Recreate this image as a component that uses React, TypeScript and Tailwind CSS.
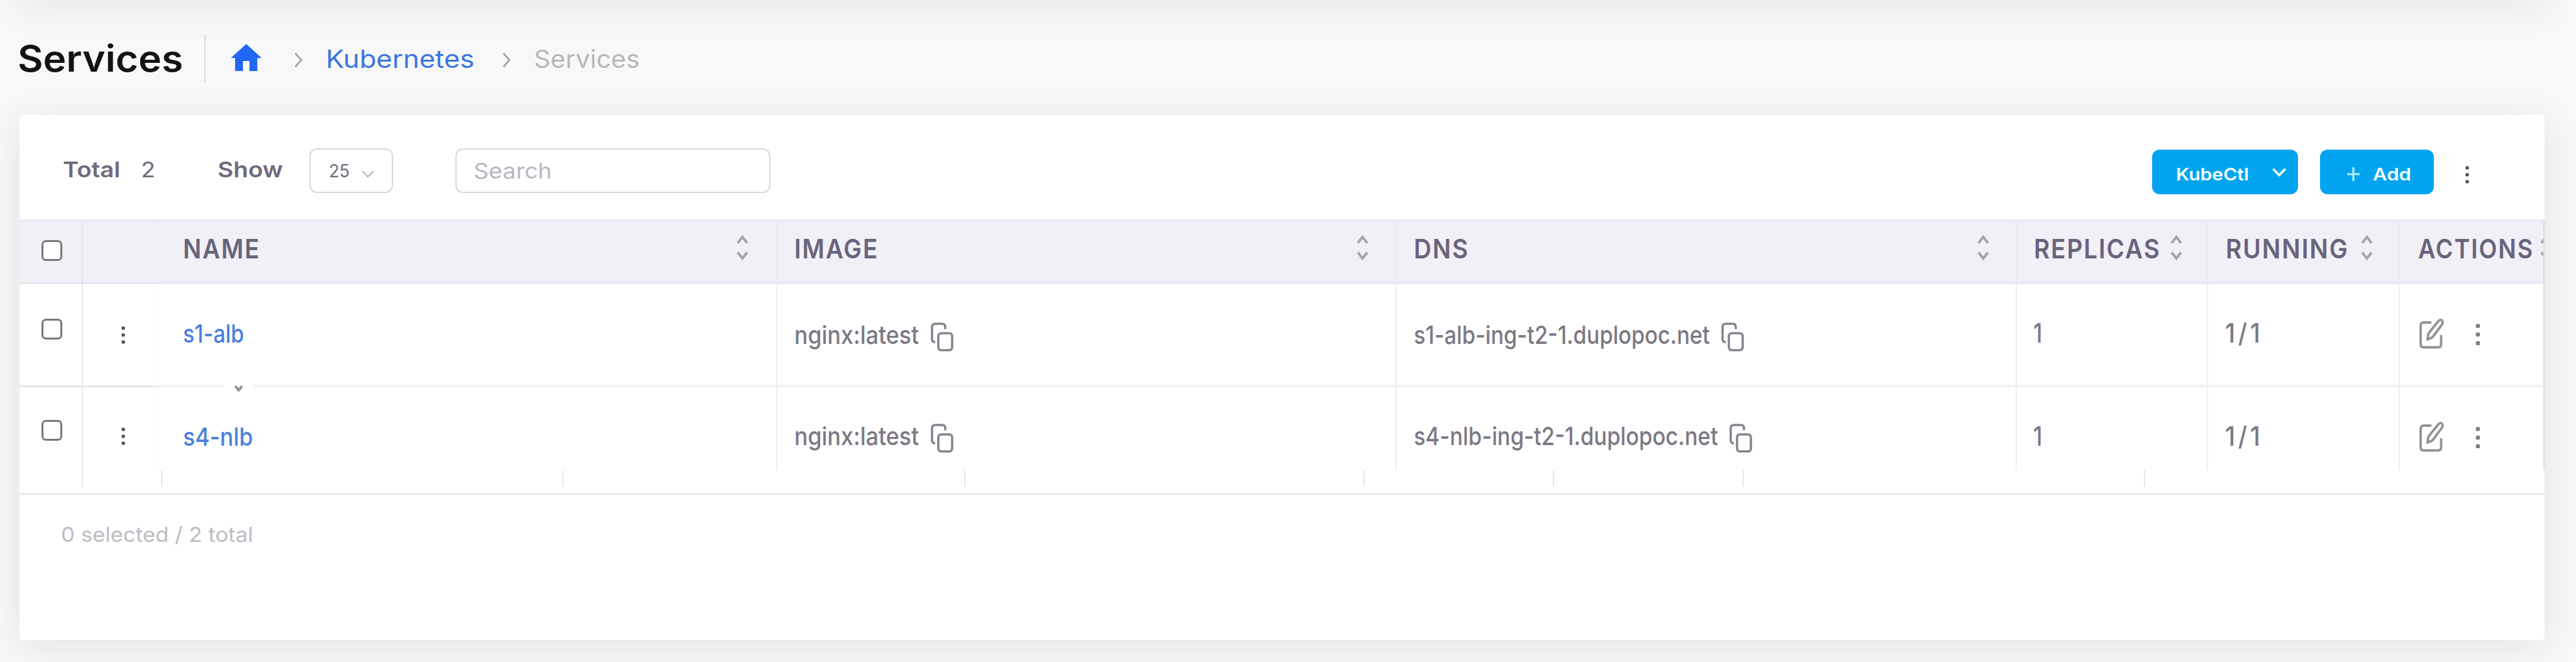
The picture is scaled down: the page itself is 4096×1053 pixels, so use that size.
import { useLayoutEffect, useRef, useState } from "react";
import type { ReactNode } from "react";

/** One line of text, condensed or widened so that it fills the given width. */
function Fit({ w, className = "", children }: { w: number; className?: string; children: ReactNode }) {
  const ref = useRef<HTMLSpanElement>(null);
  const [scale, setScale] = useState(1);
  useLayoutEffect(() => {
    if (ref.current) setScale(w / ref.current.offsetWidth);
  }, [w]);
  return (
    <span className={`block shrink-0 h-10 leading-10 whitespace-nowrap ${className}`} style={{ width: w }}>
      <span ref={ref} className="inline-block origin-left leading-10" style={{ transform: `scaleX(${scale})` }}>
        {children}
      </span>
    </span>
  );
}

function Chevron({ className }: { className: string }) {
  return (
    <svg className={`shrink-0 ${className}`} viewBox="0 0 13 25" fill="none" stroke="currentColor" strokeWidth="3">
      <path d="M1.5 1.5 11 12.5 1.5 23.5" />
    </svg>
  );
}

function Down({ className, width = 3.4 }: { className: string; width?: number }) {
  return (
    <svg className={`shrink-0 ${className}`} viewBox="0 0 20 12" fill="none" stroke="currentColor" strokeWidth={width} strokeLinejoin="round">
      <path d="M1.2 1.2 10 10.200 18.800 1.2" />
    </svg>
  );
}

function Sort({ className = "" }: { className?: string }) {
  return (
    <svg className={`h-11 w-[19px] shrink-0 text-[#a5a2b0] ${className}`} viewBox="0 0 19 44" fill="none" stroke="currentColor" strokeWidth="4">
      <path d="M2 14.500 9.500 5l7.500 9.500M2 29.500 9.500 39l7.500-9.500" />
    </svg>
  );
}

function Dots({ className }: { className: string }) {
  return (
    <svg className={`shrink-0 ${className}`} viewBox="0 0 8 28" fill="currentColor">
      <rect x="1.500" y="0.500" width="5" height="5" rx="1" />
      <rect x="1.500" y="11.500" width="5" height="5" rx="1" />
      <rect x="1.500" y="22.500" width="5" height="5" rx="1" />
    </svg>
  );
}

function Copy({ className }: { className: string }) {
  return (
    <svg className={`h-[46px] w-[36px] shrink-0 text-[#85838d] ${className}`} viewBox="0 0 36 46" fill="none" stroke="currentColor" strokeWidth="3.600">
      <rect x="12" y="17" width="22" height="27" rx="4.500" />
      <path d="M7 31.500Q2 31 2 26V7Q2 2 7 2h11Q23 2 23 7v3.500" />
    </svg>
  );
}

function Edit() {
  return (
    <svg className="mt-[54px] h-[50px] w-10 shrink-0 text-[#909296]" viewBox="0 0 40 50" fill="none" stroke="currentColor" strokeWidth="3.800" strokeLinejoin="round">
      <path d="M20 7H8Q3 7 3 12V41.500Q3 46.500 8 46.500H30.500Q35.500 46.500 35.500 41.500V27" />
      <path d="M31 5Q34.300 1 37 4Q39 6.500 37 10.200L21.800 30.500 13.800 34l1.700-9.700z" />
    </svg>
  );
}

function Checkbox({ className }: { className: string }) {
  return <span className={`block size-[33px] rounded-[7px] border-[3px] border-[#77777a] bg-white ${className}`} />;
}

const columns = [
  { label: "NAME", cell: "w-[987px] pl-[42px] pr-[44px]", w: 123 },
  { label: "IMAGE", cell: "w-[985px] pl-[27px] pr-[43px]", w: 134 },
  { label: "DNS", cell: "w-[986px] pl-[27px] pr-[42px]", w: 88 },
  { label: "REPLICAS", cell: "w-[304px] pl-[27px] pr-[39px]", w: 202 },
  { label: "RUNNING", cell: "w-[305px] pl-[28px] pr-[41px]", w: 196 },
];

const rows = [
  {
    name: "s1-alb", nameW: 97, dns: "s1-alb-ing-t2-1.duplopoc.net", dnsW: 471,
    height: "h-[164px]", check: "mt-[55px]", dots: "mt-[67px]", text: "mt-[61px]", copy: "mt-[61px]",
    edge: "border-b-[3px] border-[#e8e8eb]", edgeSoft: "border-b-[4px] border-b-[#f1f1f5]",
  },
  {
    name: "s4-nlb", nameW: 111, dns: "s4-nlb-ing-t2-1.duplopoc.net", dnsW: 484,
    height: "h-[132px]", check: "mt-[52px]", dots: "mt-[64px]", text: "mt-[58px]", copy: "mt-[58px]",
    edge: "", edgeSoft: "",
  },
];

const footTicks = ["w-[126px]", "w-[638px]", "w-[639px]", "w-[635px]", "w-[301px]", "w-[302px]", "w-[638px]"];

export default function App() {
  return (
    <div className="flex h-[1053px] w-[4096px] flex-col overflow-hidden bg-[#f8f8f8] font-['Inter',sans-serif] text-[#6e6b7b]">
      <div className="ml-[31px] h-0 w-[4015px] shrink-0">
        <div className="-mt-10 h-10 bg-white shadow-[0_10px_58px_rgba(34,41,47,0.1)]" />
      </div>

      <header className="flex h-[183px] shrink-0 items-center pl-[28px]">
        <Fit w={263} className="mt-0.5 text-[58px] font-semibold text-[#131313]">Services</Fit>
        <span className="ml-[34px] mt-0.5 h-[75px] w-0.5 bg-[#d8d9db]" />
        <svg className="ml-[40px] h-[43px] w-[49px]" viewBox="2 3 20 17" preserveAspectRatio="none" fill="#2166f5">
          <path d="M9.900 20v-6.300h4.200V20h5.100v-8.200H22L12 3 2 11.800h2.800V20z" />
        </svg>
        <Chevron className="ml-[52px] mt-2 h-[25px] w-[13px] text-[#a6a6aa]" />
        <Fit w={236} className="ml-[37px] mt-1 text-[39px] text-[#3b76de]">Kubernetes</Fit>
        <Chevron className="ml-[45px] mt-2 h-[25px] w-[13px] text-[#a6a6aa]" />
        <Fit w={168} className="ml-[37px] mt-1 text-[39px] text-[#b6b7bb]">Services</Fit>
      </header>

      <main className="ml-[30.500px] flex h-[835px] w-[4015px] shrink-0 flex-col rounded-[5px] bg-white shadow-[0_10px_58px_rgba(34,41,47,0.1)]">
        <section className="flex h-[166px] shrink-0 items-start justify-between pl-[69px] pr-[119px] pt-[53px]">
          <div className="flex h-[71px] items-center">
            <Fit w={91} className="-mt-1 text-[34.5px] font-semibold">Total</Fit>
            <Fit w={23} className="-mt-1 ml-[33px] text-[34.5px]">2</Fit>
            <Fit w={104} className="-mt-1 ml-[99px] text-[34.5px] font-semibold">Show</Fit>
            <div className="ml-[42px] flex h-[71px] w-[133px] items-center rounded-[12px] border-[2.5px] border-[#d8d6de] pl-[29px]">
              <Fit w={33} className="text-[28px]">25</Fit>
              <Down className="ml-[19px] mt-2.5 h-3 w-5 text-[#b5b5ba]" width={2.2} />
            </div>
            <div className="ml-[99px] flex h-[71px] w-[501px] items-center rounded-[12px] border-[2.5px] border-[#d8d6de] pl-[27px]">
              <Fit w={124} className="text-[34.5px] text-[#b9b7c1]">Search</Fit>
            </div>
          </div>
          <div className="mt-0.5 flex h-[71px] items-center">
            <button className="flex h-[71px] w-[232px] items-center rounded-[12px] bg-[#02a4ef] pl-[38px] text-left text-white">
              <Fit w={116} className="mt-1.5 text-[27.5px] font-semibold text-[#f2fdff]">KubeCtl</Fit>
              <Down className="ml-[37px] h-[14px] w-[22px] text-[#effcff]" />
            </button>
            <button className="ml-[35px] flex h-[71px] w-[181px] items-center rounded-[12px] bg-[#02a4ef] pl-[43px] text-left text-white">
              <svg className="mt-1.5 h-[22px] w-[20px]" viewBox="0 0 20 22" fill="none" stroke="#b8ecff" strokeWidth="3.200">
                <path d="M10 0v22M0 11h20" />
              </svg>
              <Fit w={61} className="ml-[21px] mt-1.5 text-[27.5px] font-semibold text-[#f2fdff]">Add</Fit>
            </button>
            <Dots className="ml-[49px] mt-2 h-7 w-2 text-[#4a4851]" />
          </div>
        </section>

        <div className="flex h-[103px] shrink-0 overflow-hidden border-t-[3px] border-[#ebe9f1] bg-[#f1f0f6] text-[43px] font-semibold tracking-wider text-[#69647d]">
          <div className="w-[101px] shrink-0 border-b-[3px] border-r-2 border-[#e7e5ed] pl-[35px]">
            <Checkbox className="mt-[30px]" />
          </div>
          <div className="w-[117px] shrink-0 border-b-[3px] border-r border-[#e7e5ed] border-r-[#eeecf3]" />
          {columns.map((c) => (
            <div key={c.label} className={`flex shrink-0 items-start justify-between border-b-[5px] border-r-2 border-[#ebe9f1] ${c.cell}`}>
              <Fit w={c.w} className="mt-[23px]">{c.label}</Fit>
              <Sort className="mt-[20px]" />
            </div>
          ))}
          <div className="flex w-[230px] shrink-0 items-start overflow-hidden border-b-[5px] border-r-2 border-[#ebe9f1] border-r-[#dcdbe0] pl-[29px]">
            <Fit w={184} className="mt-[23px]">ACTIONS</Fit>
            <Sort className="ml-[10px] mt-[20px]" />
          </div>
        </div>

        {rows.map((r, i) => (
          <div key={r.name} className={`flex shrink-0 text-[40px] font-medium text-[#7b7984] ${r.height}`}>
            <div className={`w-[101px] shrink-0 border-r-2 border-r-[#e9e8ec] pl-[35px] ${r.edge}`}>
              <Checkbox className={r.check} />
            </div>
            <div className={`flex w-[117px] shrink-0 items-start pl-[60px] ${r.edge}`}>
              <Dots className={`h-7 w-2 text-[#4a4851] ${r.dots}`} />
            </div>
            <div className={`relative w-[987px] shrink-0 border-l border-r-2 border-l-[#fafafa] border-r-[#ededf2] pl-[41px] ${r.edgeSoft}`}>
              <Fit w={r.nameW} className="mt-[59px] text-[#4a80de]">{r.name}</Fit>
              {i === 0 && (
                <div className="absolute -bottom-[14px] left-[106px] flex h-[20px] w-12 justify-center bg-white pt-[7px]">
                  <svg className="h-[10px] w-[13px] text-[#9896a3]" viewBox="0 0 12 9" fill="none" stroke="currentColor" strokeWidth="4">
                    <path d="M1 1 6 7 11 1" />
                  </svg>
                </div>
              )}
            </div>
            <div className={`flex w-[985px] shrink-0 items-start border-r-2 border-r-[#ededf2] pl-[27px] ${r.edgeSoft}`}>
              <Fit w={198} className={r.text}>nginx:latest</Fit>
              <Copy className={`ml-[19px] ${r.copy}`} />
            </div>
            <div className={`flex w-[986px] shrink-0 items-start border-r-2 border-r-[#ededf2] pl-[27px] ${r.edgeSoft}`}>
              <Fit w={r.dnsW} className={r.text}>{r.dns}</Fit>
              <Copy className={`ml-[18px] ${r.copy}`} />
            </div>
            <div className={`w-[304px] shrink-0 border-r-2 border-r-[#ededf2] pl-[26px] ${r.edgeSoft}`}>
              <Fit w={14} className="mt-[58px] text-[42px]">1</Fit>
            </div>
            <div className={`w-[305px] shrink-0 border-r-2 border-r-[#ededf2] pl-[27px] ${r.edgeSoft}`}>
              <Fit w={61} className="mt-[58px] text-[42px] tracking-[0.120em]">1/1</Fit>
            </div>
            <div className={`flex w-[230px] shrink-0 items-start border-r-2 border-r-[#dededf] pl-[30px] ${r.edgeSoft}`}>
              <Edit />
              <Dots className="ml-[49px] mt-[62px] h-[36px] w-[10px] text-[#7d7b86]" />
            </div>
          </div>
        ))}

        <div className="flex h-[39px] shrink-0 items-start border-b-[3px] border-[#e8e8ea]">
          <div className="h-[26px] w-[101px] shrink-0 border-r-2 border-[#e9e8ec]" />
          {footTicks.map((w, i) => (
            <div key={i} className={`h-[26px] shrink-0 border-r-2 border-[#e6e6e8] ${w}`} />
          ))}
        </div>

        <footer className="pl-[66px] pt-[43px] text-[33px] text-[#bdbcc4]">
          <Fit w={305}>0 selected / 2 total</Fit>
        </footer>
      </main>
    </div>
  );
}
